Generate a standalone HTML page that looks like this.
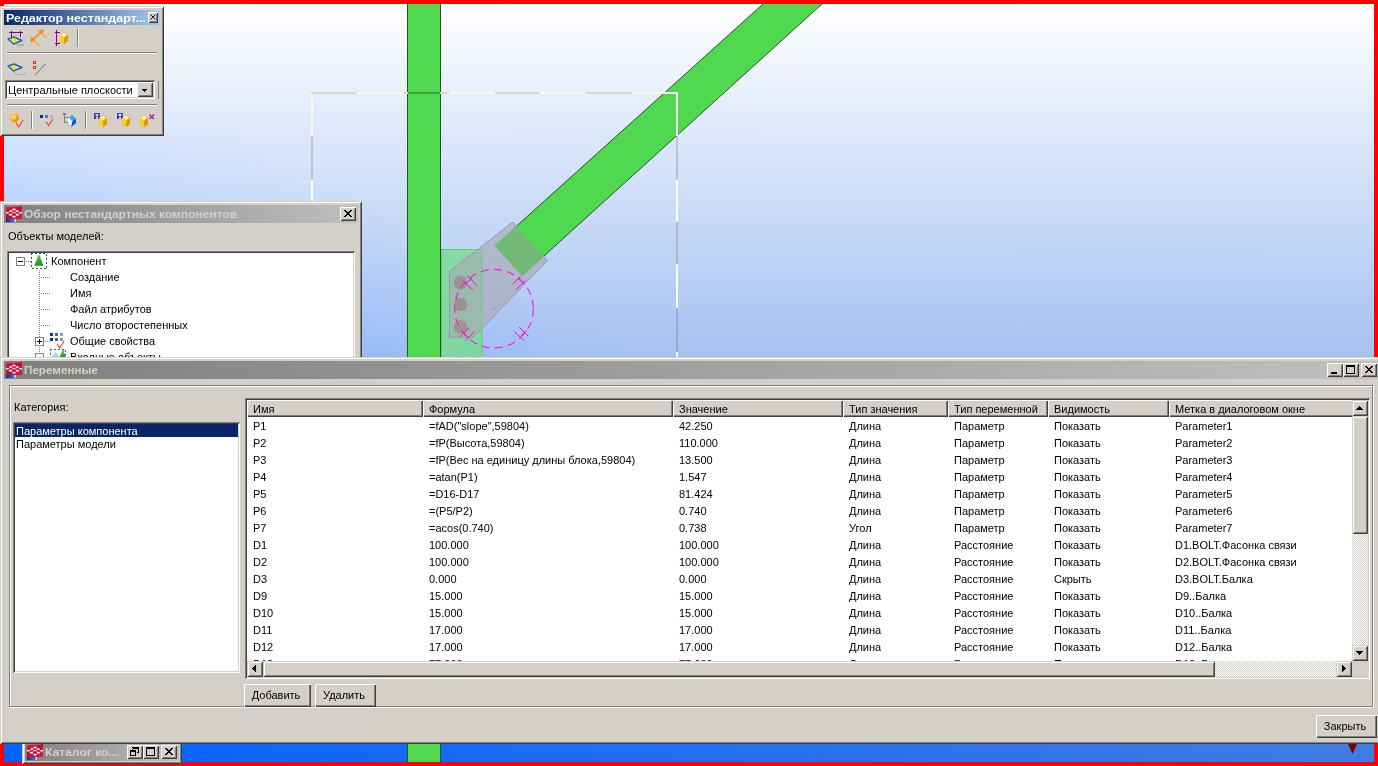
<!DOCTYPE html>
<html lang="ru">
<head>
<meta charset="utf-8">
<title>Переменные</title>
<style>
*{box-sizing:border-box;margin:0;padding:0}
html,body{width:1378px;height:766px;overflow:hidden;background:#ff0000}
body{position:relative;font-family:"Liberation Sans",sans-serif;font-size:11px;color:#000;line-height:13px}
.abs{position:absolute}
.t{position:absolute;white-space:nowrap;line-height:13px;height:13px}
#view{position:absolute;left:4px;top:4px;width:1370px;height:758px;background:linear-gradient(to bottom,#ffffff 0%,#3e7ae2 100%);overflow:hidden}
.win{position:absolute;will-change:transform;background:#d4d0c8;box-shadow:inset 1px 1px #d4d0c8,inset -1px -1px #404040,inset 2px 2px #fff,inset -2px -2px #808080}
.btn{position:absolute;background:#d4d0c8;box-shadow:inset 1px 1px #fff,inset -1px -1px #404040,inset 2px 2px #d4d0c8,inset -2px -2px #808080}
.sunk{position:absolute;background:#fff;box-shadow:inset 1px 1px #808080,inset -1px -1px #fff,inset 2px 2px #404040,inset -2px -2px #d4d0c8}
.cap{position:absolute;color:#fff;font-weight:bold;white-space:nowrap;overflow:hidden}
.sx{display:inline-block;transform-origin:0 50%}
.capi{background:linear-gradient(to right,#808080,#c0c0c0);color:#d4d0c8}
.capa{background:linear-gradient(to right,#0a246a,#a6caf0)}
.etch{position:absolute;border:1px solid #808080;box-shadow:inset 1px 1px #fff,1px 1px #fff}
.hsep{position:absolute;height:2px;border-top:1px solid #808080;border-bottom:1px solid #fff}
.vsep{position:absolute;width:2px;border-left:1px solid #808080;border-right:1px solid #fff}
.pb{position:absolute;background:#d4d0c8;text-align:center;line-height:22px;padding-right:3px;box-shadow:inset 1px 1px #fff,inset -1px -1px #404040,inset -2px -2px #808080}
.hd{position:absolute;top:0;height:17px;line-height:19px;padding-left:6px;background:#d4d0c8;white-space:nowrap;overflow:hidden;box-shadow:inset 1px 1px #fff,inset -1px -1px #404040,inset -2px -2px #808080}
.sb{position:absolute;width:16px;height:16px;background:#d4d0c8;box-shadow:inset 1px 1px #d4d0c8,inset -1px -1px #404040,inset 2px 2px #fff,inset -2px -2px #808080}
.trk{position:absolute;background:#eae8e4;background-image:conic-gradient(#fff 25%,#d4d0c8 0 50%,#fff 0 75%,#d4d0c8 0);background-size:2px 2px}
svg{position:absolute;overflow:visible}
.ico{position:absolute;width:16px;height:16px}
</style>
</head>
<body>
<div id="view">
<div class="abs" style="left:0;top:0;width:1370px;height:758px;background:linear-gradient(to bottom,#ffffff 0%,#0060ff 100%);-webkit-mask-image:conic-gradient(from 90deg at 0 0,rgba(0,0,0,0.000) 0.00deg,rgba(0,0,0,0.000) 28.96deg,rgba(0,0,0,0.079) 31.00deg,rgba(0,0,0,0.148) 33.00deg,rgba(0,0,0,0.210) 35.00deg,rgba(0,0,0,0.292) 38.00deg,rgba(0,0,0,0.364) 41.00deg,rgba(0,0,0,0.447) 45.00deg,rgba(0,0,0,0.536) 50.00deg,rgba(0,0,0,0.613) 55.00deg,rgba(0,0,0,0.681) 60.00deg,rgba(0,0,0,0.742) 65.00deg,rgba(0,0,0,0.799) 70.00deg,rgba(0,0,0,0.852) 75.00deg,rgba(0,0,0,0.902) 80.00deg,rgba(0,0,0,0.952) 85.00deg,rgba(0,0,0,1.000) 90.00deg,rgba(0,0,0,1.000) 360.00deg);mask-image:conic-gradient(from 90deg at 0 0,rgba(0,0,0,0.000) 0.00deg,rgba(0,0,0,0.000) 28.96deg,rgba(0,0,0,0.079) 31.00deg,rgba(0,0,0,0.148) 33.00deg,rgba(0,0,0,0.210) 35.00deg,rgba(0,0,0,0.292) 38.00deg,rgba(0,0,0,0.364) 41.00deg,rgba(0,0,0,0.447) 45.00deg,rgba(0,0,0,0.536) 50.00deg,rgba(0,0,0,0.613) 55.00deg,rgba(0,0,0,0.681) 60.00deg,rgba(0,0,0,0.742) 65.00deg,rgba(0,0,0,0.799) 70.00deg,rgba(0,0,0,0.852) 75.00deg,rgba(0,0,0,0.902) 80.00deg,rgba(0,0,0,0.952) 85.00deg,rgba(0,0,0,1.000) 90.00deg,rgba(0,0,0,1.000) 360.00deg)"></div>
<svg id="scene" width="1370" height="758" style="left:0;top:0" viewBox="4 4 1370 758">
<g>
<!-- vertical column -->
<rect x="407.5" y="3" width="33" height="760" fill="#50d850" stroke="#1c5a1c" stroke-width="1"/>
<!-- light green plate -->
<rect x="441.5" y="249.5" width="40.5" height="110" fill="#78dc8c" fill-opacity=".8" stroke="#5fd070" stroke-width="1"/>
<!-- diagonal brace -->
<polygon points="495,245.5 776.6,-8.2 835.4,-8.2 522.3,275.6" fill="#50d850" stroke="#1c5a1c" stroke-width="1"/>
<!-- gusset -->
<polygon points="449.5,271.5 512.8,222 547.3,260.6 473.5,337.3 449.5,337.3" fill="#a8a8b4" fill-opacity=".62" stroke="#9a9aa6" stroke-width="1"/>
<polygon points="495,245.5 516.5,226.1 543.6,256.4 522.3,275.6" fill="#62b862" fill-opacity=".55" stroke="#7ad07a" stroke-width=".8"/>
<!-- bolts -->
<circle cx="460.6" cy="282.5" r="6.8" fill="#a08c8c" fill-opacity=".85"/>
<circle cx="460.6" cy="304.5" r="6.8" fill="#a08c8c" fill-opacity=".85"/>
<circle cx="460.6" cy="326.9" r="6.8" fill="#a08c8c" fill-opacity=".85"/>
<!-- magenta circle + marks -->
<g fill="none" stroke="#ff00e0" stroke-width="1">
<circle cx="494" cy="308.7" r="39.3" stroke-dasharray="8 5.2"/>
<path d="M462.7 280.5L473.1 290.3M467.3 275.7L476.9 285.7M466.5 283.6L472.1 277.7"/>
<path d="M512.9 284L520.8 276.3M516 289.4L525.8 280.5M518 278.4L523.7 284"/>
<path d="M460.2 336.9L469.4 327.5M465.8 340.4L474.2 331.7M462.7 332L468.5 337.9"/>
<path d="M514.5 331.7L523.7 340.4M519.1 327L528.5 336.3M520.8 335.8L526.4 330.6"/>
<path d="M493.2 308.2L494.4 309.4"/>
</g>
<!-- dashed selection box -->
<g fill="none" stroke-width="2" shape-rendering="crispEdges">
<path d="M357 93H403M449 93H494.5M540 93H586M631.6 93H678M312 92V136M312 180V222M312 264V308M312 352V358M677 92V136M677 180V222M677 264V308M677 352V358" stroke="#f6fdee"/>
<path d="M311 93H357M403 93H408M440 93H449M494.5 93H540M586 93H631.6" stroke="#d6decb"/>
<path d="M312 136V180M312 222V264M312 308V352M677 136V180M677 222V264M677 308V352" stroke="#5a6450" stroke-opacity=".25"/>
<path d="M408 93H440" stroke="#3aa83a"/>
</g>
<!-- marker -->
<polygon points="1348,744 1357,744 1352.5,754" fill="#800000"/>
</g>
</svg>
</div>
<!-- shared defs -->
<svg width="0" height="0" style="left:0;top:0">
<defs>
<linearGradient id="gBlue" x1="0" y1="0" x2="1" y2="0"><stop offset="0" stop-color="#0a2a9a"/><stop offset=".75" stop-color="#3f6fd8"/><stop offset="1" stop-color="#e8f0ff"/></linearGradient>
<linearGradient id="gRed" x1="0" y1="0" x2="1" y2="1"><stop offset="0" stop-color="#e8104a"/><stop offset=".5" stop-color="#c80830"/><stop offset="1" stop-color="#e81848"/></linearGradient>
<linearGradient id="gGreen" x1="0" y1="0" x2="0" y2="1"><stop offset="0" stop-color="#58d048"/><stop offset="1" stop-color="#109018"/></linearGradient>
<linearGradient id="gTop" x1="0" y1="0" x2="1" y2="1"><stop offset="0" stop-color="#ffffff"/><stop offset="1" stop-color="#f6d890"/></linearGradient>
<radialGradient id="gOr" cx=".35" cy=".35" r=".7"><stop offset="0" stop-color="#ffe9a0"/><stop offset=".6" stop-color="#ffb020"/><stop offset="1" stop-color="#e08000"/></radialGradient>
<g id="appico">
 <path d="M0 1.2L13.6.6L15 0H16V13H0Z" fill="url(#gRed)"/>
 <rect x="0" y="13" width="10" height="3" fill="url(#gBlue)"/>
 <g fill="#fff"><rect x="0" y="6" width="2.8" height="1.4"/><rect x="13.2" y="6" width="2.8" height="1.4"/>
 <ellipse cx="8" cy="3.4" rx="1.7" ry=".9"/><ellipse cx="4.8" cy="5.1" rx="1.6" ry=".9"/><ellipse cx="11.2" cy="5.1" rx="1.6" ry=".9"/>
 <path d="M5 7.7L8 5.5L11 7.7L8 6.8Z"/><ellipse cx="4.5" cy="8.7" rx="1.7" ry=".9"/><ellipse cx="11.5" cy="8.7" rx="1.7" ry=".9"/><ellipse cx="8" cy="10.7" rx="1.7" ry=".9"/>
 <path d="M2.8 6.7L4.8 5.1M11.2 5.1L13.2 6.7M4.8 5.1L8 3.4L11.2 5.1M4.5 8.7L8 6.5L11.5 8.7M4.5 8.7L8 10.7L11.5 8.7" stroke="#fff" stroke-width=".5" fill="none" opacity=".6"/></g>
</g>
<g id="cube">
 <path d="M4 0L8 3V9L4 12L0 9V3Z" fill="#f0b400"/>
 <path d="M0 3L4 6V12L0 9Z" fill="#ffd200"/>
 <path d="M4 6L8 3V9L4 12Z" fill="#e09a00"/>
 <path d="M4 .6L7.3 3L4 5.6L.7 3Z" fill="url(#gTop)"/>
</g>
<g id="plane">
 <path d="M0 2L6 0L14 3.5L5.5 7Z" fill="#ffe020" stroke="#1068e0" stroke-width="1.4" stroke-linejoin="round"/>
</g>
<g id="floppy">
 <path d="M0 0H6V6H0Z" fill="#3434d0"/><rect x="2" y="3.6" width="2" height="2.4" fill="#d4d0c8"/>
</g>
<g id="pawn"><path d="M7.9 2C6.9 2 6.5 2.8 6.5 3.8C6.5 5 6.2 5.6 5.8 6.4C5.2 7.6 4.8 8.4 4.6 9.4C4.3 10.4 3.7 11 3.7 12.7H12.1C12.1 11 11.5 10.4 11.2 9.4C11 8.4 10.6 7.6 10 6.4C9.6 5.6 9.3 5 9.3 3.8C9.3 2.8 8.9 2 7.9 2Z" fill="url(#gGreen)"/></g>
</defs>
</svg>
<!-- floating toolbar -->
<div class="win" id="tb" style="left:0;top:6px;width:164px;height:130px">
  <div class="cap capa" style="left:4px;top:4px;width:156px;height:15px;line-height:17px;padding-left:2px"><span class="sx" style="transform:scaleX(1.132)">Редактор нестандарт...</span></div>
  <div class="btn" style="left:148px;top:6px;width:10px;height:11px"><svg width="6" height="6" style="left:2px;top:2px"><path d="M.5 .5L5.5 5.5M5.5 .5L.5 5.5" stroke="#000" stroke-width=".9" fill="none"/></svg></div>
  <div class="hsep" style="left:7px;top:46px;width:150px"></div>
  <div class="hsep" style="left:7px;top:98px;width:150px"></div>
  <div class="vsep" style="left:77px;top:23px;height:18px"></div>
  <div class="vsep" style="left:31px;top:105px;height:18px"></div>
  <div class="vsep" style="left:85px;top:105px;height:18px"></div>
  <div class="vsep" style="left:158px;top:75px;height:18px;border-right:0;width:1px"></div>
  <div class="sunk" style="left:5px;top:74px;width:150px;height:19px">
    <div class="t" style="left:3px;top:4px">Центральные плоскости</div>
    <div class="btn" style="left:132px;top:2px;width:16px;height:15px"><svg width="5" height="3" style="left:5px;top:7px" shape-rendering="crispEdges"><path d="M0 0h5v1h-1v1h-1v1h-1v-1h-1v-1h-1z" fill="#000"/></svg></div>
  </div>
  <svg width="164" height="130" style="left:0;top:0" viewBox="0 6 164 130">
   <!-- row 1 -->
   <g stroke="#800080" stroke-width="1" fill="none" shape-rendering="crispEdges"><path d="M9 32.5H23M11.5 31V37M20.5 31V37"/></g>
   <path d="M16 44.5H23.5V46H18" fill="none" stroke="#a8a8a8" stroke-width="1"/>
   <use href="#plane" x="8" y="37"/>
   <g stroke="#ff8c00" fill="none" stroke-linecap="round"><path d="M31.5 41L43 30.2" stroke-width="1.8"/><path d="M31.2 37.8L39 45.6M38.5 30L46 37.6" stroke-width="1"/><path d="M31 41L34.5 40.2M31 41L32 37.6M43 30.2L39.8 31M43 30.2L42.2 33.4" stroke-width="1.2"/></g>
   <g stroke="#800080" stroke-width="1" fill="none" shape-rendering="crispEdges"><path d="M56.5 30V46M55 32.5H60M55 43.5H60"/></g>
   <use href="#cube" x="60" y="32"/>
   <!-- row 2 -->
   <path d="M12.5 70L16 74.5H24.5V72" fill="none" stroke="#b4b4b4" stroke-width="1.2"/>
   <use href="#plane" x="8" y="64"/>
   <g shape-rendering="crispEdges"><rect x="33" y="61" width="3" height="3" fill="#ff3000"/><rect x="34" y="62" width="1" height="1" fill="#fff"/><rect x="33" y="66" width="3" height="3" fill="#ff3000"/><rect x="34" y="67" width="1" height="1" fill="#fff"/></g>
   <path d="M35 75L45.5 64" stroke="#707070" stroke-width="1" fill="none"/>
   <!-- row 3 -->
   <path d="M13.5 113.2A4.6 4.6 0 1 1 9.6 117.6L13.2 118Z" fill="url(#gOr)"/>
   <path d="M9.4 116.4A4.4 4.4 0 0 1 12.6 113.3L12.6 116.6Z" fill="#ffc040"/>
   <path d="M16 122.6L18.7 127L23 120" stroke="#ff4820" stroke-width="1.2" fill="none"/>
   <g shape-rendering="crispEdges"><rect x="40" y="115" width="3" height="3" fill="#0030a0"/><rect x="45" y="115" width="3" height="3" fill="#5078c8"/><rect x="50" y="115" width="3" height="3" fill="#a0b4e0"/></g>
   <path d="M46 121.6L48.7 125.6L53 119" stroke="#ff4820" stroke-width="1.2" fill="none"/>
   <g stroke="#808080" stroke-width="1" fill="none" shape-rendering="crispEdges"><path d="M64.5 115V122.5H69M64.5 117.5H69"/><rect x="63" y="113" width="3" height="2" fill="#808080" stroke="none"/></g>
   <path d="M72 115L76 119V123L71 127L68 123V118Z" fill="#0a50c8"/><path d="M72 115L68 118V123L71 127L72.5 121Z" fill="#f4f8ff"/><path d="M72 115L76 119L72.5 121L68.6 118Z" fill="#48a0f0"/>
   <use href="#floppy" x="94" y="113"/><rect x="95.5" y="114" width="3" height="1.8" fill="#ffe860"/>
   <use href="#cube" x="99" y="115"/>
   <use href="#floppy" x="117" y="113"/><rect x="118.5" y="114" width="3" height="1.8" fill="#f0f4ff"/>
   <use href="#cube" x="122" y="115"/>
   <use href="#cube" x="140" y="115"/>
   <path d="M149.5 114.5L154 119M154 114.5L149.5 119" stroke="#a020a0" stroke-width="1.3" fill="none"/>
  </svg>
</div>
<!-- browser window -->
<div class="win" id="w2" style="left:0;top:201px;width:362px;height:170px">
  <div class="cap capi" style="left:4px;top:4px;width:354px;height:18px;line-height:19px;padding-left:20px"><span class="sx" style="transform:scaleX(1.089)">Обзор нестандартных компонентов</span></div>
  <svg class="ico" style="left:6px;top:5px" viewBox="0 0 16 16"><use href="#appico"/></svg>
  <div class="btn" style="left:340px;top:6px;width:16px;height:14px"><svg width="8" height="7" style="left:4px;top:3px" shape-rendering="crispEdges"><path d="M0 0h2v1h1v1h2v-1h1v-1h2v1h-1v1h-1v1h-1v1h1v1h1v1h1v1h-2v-1h-1v-1h-2v1h-1v1h-2v-1h1v-1h1v-1h1v-1h-1v-1h-1v-1h-1z" fill="#000"/></svg></div>
  <div class="t" style="left:8px;top:29px">Объекты моделей:</div>
  <div class="sunk" style="left:7px;top:50px;width:348px;height:130px"></div>
  <svg width="362" height="170" style="left:0;top:0" viewBox="0 201 362 170">
    <g stroke="#808080" stroke-width="1" fill="none" shape-rendering="crispEdges" stroke-dasharray="1 1">
      <path d="M26 261.5H31"/>
      <path d="M39.5 270V337M39.5 347V353"/>
      <path d="M41 277.5H50M41 293.5H50M41 309.5H50M41 325.5H50M45 341.5H50"/>
    </g>
    <g shape-rendering="crispEdges">
      <rect x="16.5" y="257.5" width="8" height="8" fill="#fff" stroke="#808080"/><path d="M18 261.5H23" stroke="#000"/>
      <rect x="35.5" y="337.5" width="8" height="8" fill="#fff" stroke="#808080"/><path d="M37 341.5H42M39.5 339V344" stroke="#000"/>
      <rect x="35.5" y="353.5" width="8" height="8" fill="#fff" stroke="#808080"/>
      <rect x="31.5" y="253.5" width="15" height="15" fill="none" stroke="#0a50c8" stroke-dasharray="2 2" stroke-dashoffset="1"/>
      <rect x="50.5" y="349.5" width="15" height="15" fill="none" stroke="#0a78d8" stroke-dasharray="2 2" stroke-dashoffset="1"/>
      <rect x="50" y="333" width="3" height="3" fill="#0a30a0"/><rect x="55" y="333" width="3" height="3" fill="#3c60b8"/><rect x="60" y="333" width="3" height="3" fill="#8098d0"/>
      <rect x="50" y="338" width="3" height="3" fill="#0a30a0"/><rect x="55" y="338" width="3" height="3" fill="#3c60b8"/><rect x="60" y="338" width="3" height="3" fill="#8098d0"/>
    </g>
    <use href="#pawn" x="31" y="253"/>
    <path d="M57 343.8L59.7 348L64 341" stroke="#ff4820" stroke-width="1.2" fill="none"/>
    <path d="M52 357L55.5 352.5L59 357Z" fill="#b8dcff" stroke="#80b8f0" stroke-width=".6"/>
    <g transform="translate(56.5,348.5) scale(.8)"><use href="#pawn"/></g>
  </svg>
  <div class="t" style="left:51px;top:54px">Компонент</div>
  <div class="t" style="left:70px;top:70px">Создание</div>
  <div class="t" style="left:70px;top:86px">Имя</div>
  <div class="t" style="left:70px;top:102px">Файл атрибутов</div>
  <div class="t" style="left:70px;top:118px">Число второстепенных</div>
  <div class="t" style="left:70px;top:134px">Общие свойства</div>
  <div class="t" style="left:70px;top:150px">Входные объекты</div>
</div>
<!-- minimised window -->
<div class="win" id="w4" style="left:22px;top:740px;width:160px;height:24px">
  <div class="cap capi" style="left:3px;top:3px;width:154px;height:18px;line-height:19px;padding-left:20px"><span class="sx" style="transform:scaleX(1.098)">Каталог ко...</span></div>
  <svg class="ico" style="left:5px;top:4px" viewBox="0 0 16 16"><use href="#appico"/></svg>
  <div class="btn" style="left:105px;top:5px;width:16px;height:14px"><svg width="9" height="9" style="left:3px;top:2px" shape-rendering="crispEdges"><path d="M2.5 1H8.5V5.5H7M2.5 2V3" stroke="#000" fill="none"/><path d="M2 .5H9" stroke="#000"/><rect x=".5" y="4" width="5" height="4.5" fill="none" stroke="#000"/><path d="M0 3.5H6" stroke="#000"/></svg></div>
  <div class="btn" style="left:121px;top:5px;width:16px;height:14px"><div class="abs" style="left:3px;top:2px;width:9px;height:9px;border:1px solid #000;border-top-width:2px"></div></div>
  <div class="btn" style="left:139px;top:5px;width:16px;height:14px"><svg width="8" height="7" style="left:4px;top:3px" shape-rendering="crispEdges"><path d="M0 0h2v1h1v1h2v-1h1v-1h2v1h-1v1h-1v1h-1v1h1v1h1v1h1v1h-2v-1h-1v-1h-2v1h-1v1h-2v-1h1v-1h1v-1h1v-1h-1v-1h-1v-1h-1z" fill="#000"/></svg></div>
</div>
<!-- variables window -->
<div class="win" id="w3" style="left:0;top:357px;width:1380px;height:387px">
  <div class="cap capi" style="left:4px;top:4px;width:1374px;height:18px;line-height:19px;padding-left:20px"><span class="sx" style="transform:scaleX(1.06)">Переменные</span></div>
  <svg class="ico" style="left:6px;top:5px" viewBox="0 0 16 16"><use href="#appico"/></svg>
  <div class="btn" style="left:1327px;top:6px;width:16px;height:14px"><div class="abs" style="left:4px;top:9px;width:6px;height:2px;background:#000"></div></div>
  <div class="btn" style="left:1343px;top:6px;width:16px;height:14px"><div class="abs" style="left:3px;top:2px;width:9px;height:9px;border:1px solid #000;border-top-width:2px"></div></div>
  <div class="btn" style="left:1361px;top:6px;width:16px;height:14px"><svg width="8" height="7" style="left:4px;top:3px" shape-rendering="crispEdges"><path d="M0 0h2v1h1v1h2v-1h1v-1h2v1h-1v1h-1v1h-1v1h1v1h1v1h1v1h-2v-1h-1v-1h-2v1h-1v1h-2v-1h1v-1h1v-1h1v-1h-1v-1h-1v-1h-1z" fill="#000"/></svg></div>
  <div class="etch" style="left:9px;top:28px;width:1364px;height:322px"></div>
  <div class="t" style="left:14px;top:44px">Категория:</div>
  <div class="sunk" style="left:13px;top:65px;width:227px;height:251px">
    <div class="abs" style="left:2px;top:2px;width:223px;height:13px;background:#0a246a"></div>
    <div class="t" style="left:3px;top:3px;color:#fff">Параметры компонента</div>
    <div class="t" style="left:3px;top:16px">Параметры модели</div>
  </div>
  <div class="sunk" style="left:245px;top:41px;width:1125px;height:281px">
   <div class="abs" id="tbl" style="left:2px;top:2px;width:1105px;height:261px;overflow:hidden">
<div class="hd" style="left:0px;width:176px">Имя</div>
<div class="hd" style="left:176px;width:250px">Формула</div>
<div class="hd" style="left:426px;width:170px">Значение</div>
<div class="hd" style="left:596px;width:105px">Тип значения</div>
<div class="hd" style="left:701px;width:100px">Тип переменной</div>
<div class="hd" style="left:801px;width:121px">Видимость</div>
<div class="hd" style="left:922px;width:231px">Метка в диалоговом окне</div>
<div class="t" style="left:6px;top:20px">P1</div>
<div class="t" style="left:182px;top:20px">=fAD(&quot;slope&quot;,59804)</div>
<div class="t" style="left:432px;top:20px">42.250</div>
<div class="t" style="left:602px;top:20px">Длина</div>
<div class="t" style="left:707px;top:20px">Параметр</div>
<div class="t" style="left:807px;top:20px">Показать</div>
<div class="t" style="left:928px;top:20px">Parameter1</div>
<div class="t" style="left:6px;top:37px">P2</div>
<div class="t" style="left:182px;top:37px">=fP(Высота,59804)</div>
<div class="t" style="left:432px;top:37px">110.000</div>
<div class="t" style="left:602px;top:37px">Длина</div>
<div class="t" style="left:707px;top:37px">Параметр</div>
<div class="t" style="left:807px;top:37px">Показать</div>
<div class="t" style="left:928px;top:37px">Parameter2</div>
<div class="t" style="left:6px;top:54px">P3</div>
<div class="t" style="left:182px;top:54px">=fP(Вес на единицу длины блока,59804)</div>
<div class="t" style="left:432px;top:54px">13.500</div>
<div class="t" style="left:602px;top:54px">Длина</div>
<div class="t" style="left:707px;top:54px">Параметр</div>
<div class="t" style="left:807px;top:54px">Показать</div>
<div class="t" style="left:928px;top:54px">Parameter3</div>
<div class="t" style="left:6px;top:71px">P4</div>
<div class="t" style="left:182px;top:71px">=atan(P1)</div>
<div class="t" style="left:432px;top:71px">1.547</div>
<div class="t" style="left:602px;top:71px">Длина</div>
<div class="t" style="left:707px;top:71px">Параметр</div>
<div class="t" style="left:807px;top:71px">Показать</div>
<div class="t" style="left:928px;top:71px">Parameter4</div>
<div class="t" style="left:6px;top:88px">P5</div>
<div class="t" style="left:182px;top:88px">=D16-D17</div>
<div class="t" style="left:432px;top:88px">81.424</div>
<div class="t" style="left:602px;top:88px">Длина</div>
<div class="t" style="left:707px;top:88px">Параметр</div>
<div class="t" style="left:807px;top:88px">Показать</div>
<div class="t" style="left:928px;top:88px">Parameter5</div>
<div class="t" style="left:6px;top:105px">P6</div>
<div class="t" style="left:182px;top:105px">=(P5/P2)</div>
<div class="t" style="left:432px;top:105px">0.740</div>
<div class="t" style="left:602px;top:105px">Длина</div>
<div class="t" style="left:707px;top:105px">Параметр</div>
<div class="t" style="left:807px;top:105px">Показать</div>
<div class="t" style="left:928px;top:105px">Parameter6</div>
<div class="t" style="left:6px;top:122px">P7</div>
<div class="t" style="left:182px;top:122px">=acos(0.740)</div>
<div class="t" style="left:432px;top:122px">0.738</div>
<div class="t" style="left:602px;top:122px">Угол</div>
<div class="t" style="left:707px;top:122px">Параметр</div>
<div class="t" style="left:807px;top:122px">Показать</div>
<div class="t" style="left:928px;top:122px">Parameter7</div>
<div class="t" style="left:6px;top:139px">D1</div>
<div class="t" style="left:182px;top:139px">100.000</div>
<div class="t" style="left:432px;top:139px">100.000</div>
<div class="t" style="left:602px;top:139px">Длина</div>
<div class="t" style="left:707px;top:139px">Расстояние</div>
<div class="t" style="left:807px;top:139px">Показать</div>
<div class="t" style="left:928px;top:139px">D1.BOLT.Фасонка связи</div>
<div class="t" style="left:6px;top:156px">D2</div>
<div class="t" style="left:182px;top:156px">100.000</div>
<div class="t" style="left:432px;top:156px">100.000</div>
<div class="t" style="left:602px;top:156px">Длина</div>
<div class="t" style="left:707px;top:156px">Расстояние</div>
<div class="t" style="left:807px;top:156px">Показать</div>
<div class="t" style="left:928px;top:156px">D2.BOLT.Фасонка связи</div>
<div class="t" style="left:6px;top:173px">D3</div>
<div class="t" style="left:182px;top:173px">0.000</div>
<div class="t" style="left:432px;top:173px">0.000</div>
<div class="t" style="left:602px;top:173px">Длина</div>
<div class="t" style="left:707px;top:173px">Расстояние</div>
<div class="t" style="left:807px;top:173px">Скрыть</div>
<div class="t" style="left:928px;top:173px">D3.BOLT.Балка</div>
<div class="t" style="left:6px;top:190px">D9</div>
<div class="t" style="left:182px;top:190px">15.000</div>
<div class="t" style="left:432px;top:190px">15.000</div>
<div class="t" style="left:602px;top:190px">Длина</div>
<div class="t" style="left:707px;top:190px">Расстояние</div>
<div class="t" style="left:807px;top:190px">Показать</div>
<div class="t" style="left:928px;top:190px">D9..Балка</div>
<div class="t" style="left:6px;top:207px">D10</div>
<div class="t" style="left:182px;top:207px">15.000</div>
<div class="t" style="left:432px;top:207px">15.000</div>
<div class="t" style="left:602px;top:207px">Длина</div>
<div class="t" style="left:707px;top:207px">Расстояние</div>
<div class="t" style="left:807px;top:207px">Показать</div>
<div class="t" style="left:928px;top:207px">D10..Балка</div>
<div class="t" style="left:6px;top:224px">D11</div>
<div class="t" style="left:182px;top:224px">17.000</div>
<div class="t" style="left:432px;top:224px">17.000</div>
<div class="t" style="left:602px;top:224px">Длина</div>
<div class="t" style="left:707px;top:224px">Расстояние</div>
<div class="t" style="left:807px;top:224px">Показать</div>
<div class="t" style="left:928px;top:224px">D11..Балка</div>
<div class="t" style="left:6px;top:241px">D12</div>
<div class="t" style="left:182px;top:241px">17.000</div>
<div class="t" style="left:432px;top:241px">17.000</div>
<div class="t" style="left:602px;top:241px">Длина</div>
<div class="t" style="left:707px;top:241px">Расстояние</div>
<div class="t" style="left:807px;top:241px">Показать</div>
<div class="t" style="left:928px;top:241px">D12..Балка</div>
<div class="t" style="left:6px;top:258px">D13</div>
<div class="t" style="left:182px;top:258px">77.000</div>
<div class="t" style="left:432px;top:258px">77.000</div>
<div class="t" style="left:602px;top:258px">Длина</div>
<div class="t" style="left:707px;top:258px">Расстояние</div>
<div class="t" style="left:807px;top:258px">Показать</div>
<div class="t" style="left:928px;top:258px">D13..Балка</div>   </div>
   <!-- v scrollbar -->
   <div class="trk" style="left:1107px;top:2px;width:16px;height:261px"></div>
   <div class="sb" style="left:1107px;top:2px"><svg width="7" height="4" style="left:4px;top:6px" shape-rendering="crispEdges"><path d="M3 0h1v1h1v1h1v1h1v1h-7v-1h1v-1h1v-1h1z" fill="#000"/></svg></div>
   <div class="sb" style="left:1107px;top:18px;height:118px"></div>
   <div class="sb" style="left:1107px;top:247px"><svg width="7" height="4" style="left:4px;top:6px" shape-rendering="crispEdges"><path d="M0 0h7v1h-1v1h-1v1h-1v1h-1v-1h-1v-1h-1v-1h-1z" fill="#000"/></svg></div>
   <!-- h scrollbar -->
   <div class="trk" style="left:2px;top:263px;width:1105px;height:16px"></div>
   <div class="sb" style="left:2px;top:263px"><svg width="4" height="7" style="left:5px;top:4px" shape-rendering="crispEdges"><path d="M3 0h1v7h-1v-1h-1v-1h-1v-1h-1v-1h1v-1h1v-1h1z" fill="#000"/></svg></div>
   <div class="sb" style="left:18px;top:263px;width:952px"></div>
   <div class="sb" style="left:1091px;top:263px"><svg width="4" height="7" style="left:6px;top:4px" shape-rendering="crispEdges"><path d="M0 0h1v1h1v1h1v1h1v1h-1v1h-1v1h-1v1h-1z" fill="#000"/></svg></div>
   <div class="abs" style="left:1107px;top:263px;width:16px;height:16px;background:#d4d0c8"></div>
  </div>
  <div class="pb" style="left:244px;top:327px;width:67px;height:23px">Добавить</div>
  <div class="pb" style="left:315px;top:327px;width:61px;height:23px">Удалить</div>
  <div class="pb" style="left:1316px;top:358px;width:61px;height:23px">Закрыть</div>
</div>
</body>
</html>
